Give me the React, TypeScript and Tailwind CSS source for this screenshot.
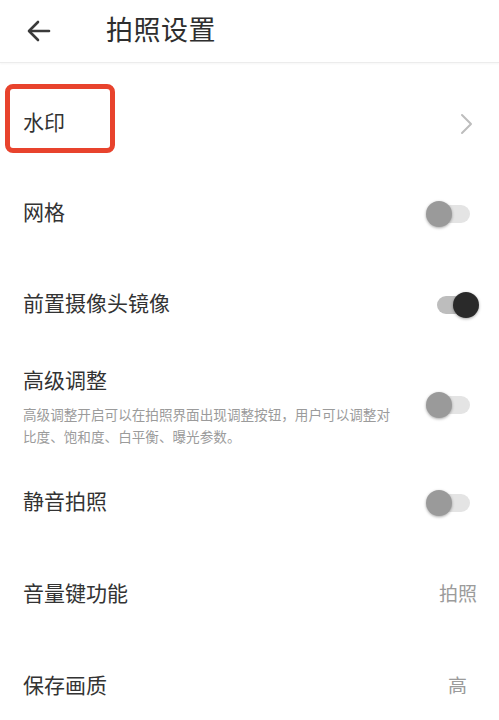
const font = "font-['Roboto','Noto_Sans_CJK_SC',sans-serif]";

function Toggle({ on }: { on?: boolean }) {
  return (
    <div className="relative h-[28px] w-[56px] shrink-0">
      <div
        className={`absolute top-[5px] left-[12px] h-[18px] w-[33px] rounded-full ${
          on ? "bg-[#bdbdbd]" : "bg-[#e4e4e4]"
        }`}
      />
      <div
        className={`absolute top-[1px] size-[26px] rounded-full shadow-[0_1px_3px_rgba(0,0,0,0.35)] ${
          on ? "left-[28px] bg-[#2a2a2a]" : "left-[1px] bg-[#9a9a9a]"
        }`}
      />
    </div>
  );
}

function Row({
  label,
  height,
  children,
}: {
  label: string;
  height: string;
  children?: React.ReactNode;
}) {
  return (
    <div className={`flex items-center justify-between pl-[23px] pr-[22px] ${height}`}>
      <span className="text-[21px] text-[#333]">{label}</span>
      {children}
    </div>
  );
}

export default function App() {
  return (
    <div className={`min-h-screen w-full overflow-hidden bg-white ${font}`}>
      <header className="flex h-[63px] items-center border-b border-[#ececec] shadow-[0_1px_2px_rgba(0,0,0,0.04)]">
        <div className="flex w-[106px] justify-start pl-[27px]">
          <svg width="24" height="22" viewBox="0 0 24 22" fill="none" stroke="#3a3a3a" strokeWidth="2.6" strokeLinecap="round" strokeLinejoin="round">
            <path d="M22 11H3" />
            <path d="M11 2L2 11l9 9" />
          </svg>
        </div>
        <h1 className="text-[27px] text-[#2e2e2e] tracking-[0.5px]">拍照设置</h1>
      </header>

      <div className="pt-[16px]">
        <div className="relative">
          <Row label="水印" height="h-[90px]">
            <svg width="14" height="22" viewBox="0 0 14 22" fill="none" stroke="#bdbdbd" strokeWidth="2" strokeLinecap="round" strokeLinejoin="round" className="mr-[4px]">
              <path d="M3 2l9 9-9 9" />
            </svg>
          </Row>
          <div className="absolute left-[5px] top-[5px] h-[69px] w-[110px] rounded-[8px] border-[5px] border-[#e8432d]" />
        </div>

        <Row label="网格" height="h-[90px]">
          <div className="-mr-[4px]">
            <Toggle />
          </div>
        </Row>

        <Row label="前置摄像头镜像" height="h-[92px]">
          <div className="-mr-[4px]">
            <Toggle on />
          </div>
        </Row>

        <div className="flex h-[106px] items-start justify-between pl-[23px] pr-[18px] pt-[16px]">
          <div className="flex w-[380px] flex-col">
            <span className="text-[21px] leading-[28px] text-[#333]">高级调整</span>
            <p className="mt-[9px] text-[13.6px] leading-[22px] text-[#9b9b9b]">
              高级调整开启可以在拍照界面出现调整按钮，用户可以调整对比度、饱和度、白平衡、曝光参数。
            </p>
          </div>
          <div className="mt-[24px]">
            <Toggle />
          </div>
        </div>

        <Row label="静音拍照" height="h-[92px]">
          <div className="-mr-[4px]">
            <Toggle />
          </div>
        </Row>

        <Row label="音量键功能" height="h-[92px]">
          <span className="text-[19px] text-[#9b9b9b]">拍照</span>
        </Row>

        <Row label="保存画质" height="h-[92px]">
          <span className="mr-[10px] text-[19px] text-[#9b9b9b]">高</span>
        </Row>
      </div>
    </div>
  );
}
